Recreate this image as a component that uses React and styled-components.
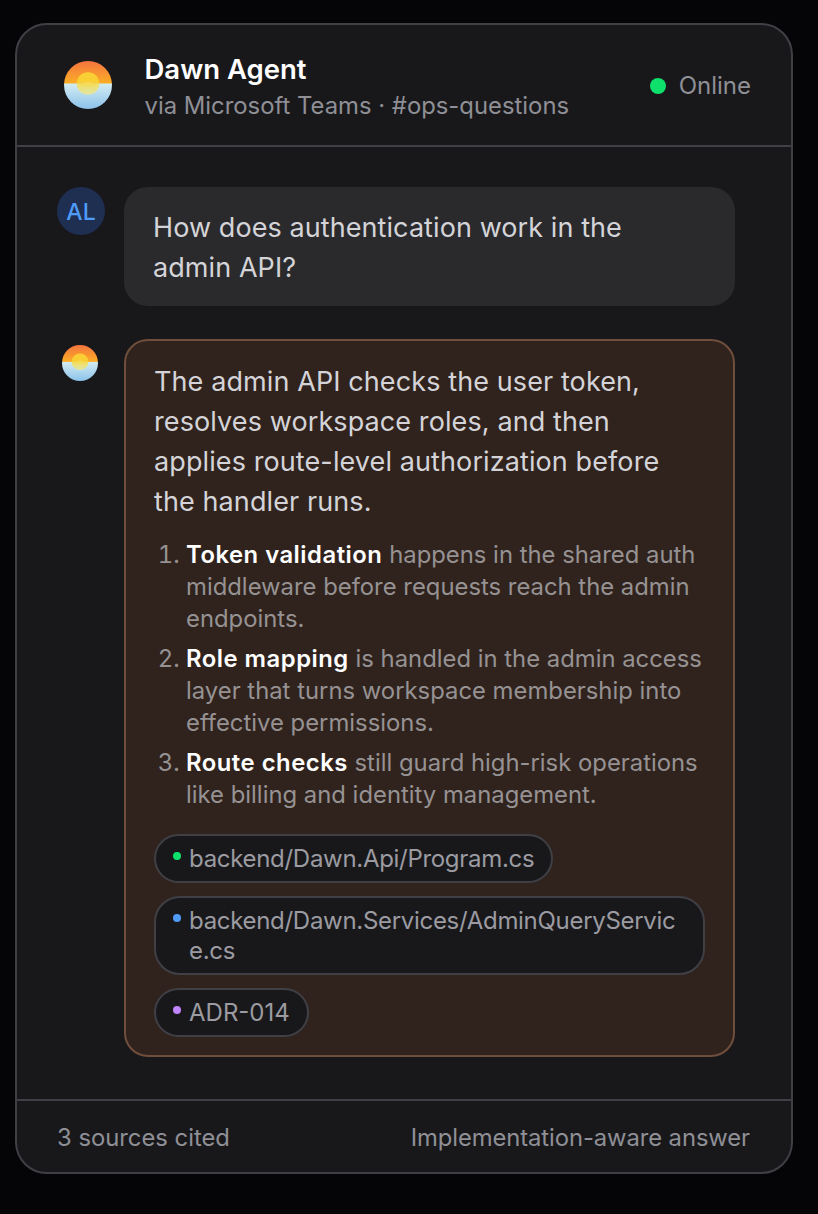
import React from 'react'
import styled, { createGlobalStyle } from 'styled-components'

const GlobalStyle = createGlobalStyle`
  html, body {
    margin: 0;
    background: #050507;
  }
  * {
    box-sizing: border-box;
  }
`

const Page = styled.div`
  min-height: 1214px;
  padding: 23px 25px 40px 15px;
  font-family: Inter, 'Liberation Sans', sans-serif;
`

const Card = styled.section`
  display: flex;
  flex-direction: column;
  height: 1151px;
  border: 2px solid #3f3f46;
  border-radius: 32px;
  background: #18181b;
  overflow: hidden;
`

const Header = styled.header`
  display: flex;
  align-items: center;
  gap: 33px;
  height: 122px;
  padding: 0 40px 0 47px;
  border-bottom: 2px solid #3f3f46;
`

const HeaderText = styled.div`
  flex: 1;
  display: flex;
  flex-direction: column;
  gap: 4px;
  padding-top: 3px;
  margin-left: -0.5px;
`

const Title = styled.h1`
  margin: 0;
  font-size: 27.5px;
  line-height: 34px;
  font-weight: 600;
  color: #fff;
`

const Subtitle = styled.div`
  font-size: 23.85px;
  line-height: 32px;
  color: #8f8f96;
`

const Status = styled.div`
  display: flex;
  align-items: center;
  gap: 13px;
  padding-top: 2px;
  font-size: 24px;
  line-height: 32px;
  color: #8f8f96;
`

const Dot = styled.span`
  flex: none;
  width: ${props => props.$size}px;
  height: ${props => props.$size}px;
  border-radius: 50%;
  background: ${props => props.$color};
`

const Thread = styled.div`
  flex: 1;
  display: flex;
  flex-direction: column;
  gap: 33px;
  padding: 40px 56px 0 40px;
`

const Message = styled.article`
  display: flex;
  gap: 19px;
`

const AvatarSlot = styled.div`
  flex: none;
  width: 48px;
  display: flex;
  justify-content: center;
`

const AgentAvatarSlot = styled(AvatarSlot)`
  padding: 6px 2px 0 0;
`

const Initials = styled.div`
  width: 48px;
  height: 48px;
  padding-top: 1px;
  border-radius: 50%;
  background: #1e2f52;
  color: #4f9bf7;
  font-size: 23px;
  font-weight: 500;
  display: flex;
  align-items: center;
  justify-content: center;
`

const UserBubble = styled.div`
  flex: 1;
  padding: 21px 29px 18px;
  border-radius: 24px;
  background: #2a2a2d;
  color: #d4d4d8;
  font-size: 27px;
  letter-spacing: 0.08px;
  line-height: 40px;
`

const AgentBubble = styled.div`
  flex: 1;
  height: 718px;
  padding: 21px 28px 0;
  border: 2px solid #6f4e3c;
  border-radius: 24px;
  background: #30231d;
`

const Lead = styled.p`
  margin: 0;
  color: #d4d4d8;
  font-size: 27px;
  letter-spacing: 0.1px;
  line-height: 40px;
`

const Steps = styled.ol`
  margin: 17px 0 0;
  padding: 0 0 0 32px;
  display: flex;
  flex-direction: column;
  gap: 8px;
  color: #969293;
  font-size: 23.85px;
  line-height: 32px;
`

const Step = styled.li`
  padding-left: 0;
`

const Strong = styled.strong`
  color: #fff;
  font-weight: 600;
  letter-spacing: 0.5px;
`

const Sources = styled.div`
  margin-top: 23px;
  display: flex;
  flex-direction: column;
  align-items: flex-start;
  gap: 13px;
`

const Pill = styled.div`
  display: flex;
  gap: 8px;
  max-width: 100%;
  padding: 8px 17px 7px;
  border: 2px solid #3f3f46;
  border-radius: 26px;
  background: #18181b;
  color: #9b9ba1;
  font-size: 24px;
  letter-spacing: ${props => (props.$path ? '-0.3px' : '0')};
  line-height: 30px;
`

const PillDot = styled(Dot)`
  margin-top: 8px;
`

const PillLabel = styled.span`
  min-width: 0;
  overflow-wrap: anywhere;
`

const Footer = styled.footer`
  display: flex;
  justify-content: space-between;
  align-items: center;
  height: 73px;
  padding: 2px 41px 0 40px;
  border-top: 2px solid #3f3f46;
  color: #8f8f96;
  font-size: 23.8px;
`

const FooterNote = styled.span`
  letter-spacing: -0.08px;
`

const DawnLogo = ({ size }) => (
  <svg width={size} height={size} viewBox="0 0 48 48" aria-hidden="true">
    <defs>
      <linearGradient id="dawnSky" x1="0" y1="0" x2="0" y2="1">
        <stop offset="0" stopColor="#f4743f" />
        <stop offset="1" stopColor="#fbaf25" />
      </linearGradient>
      <linearGradient id="dawnSea" x1="0" y1="0" x2="0" y2="1">
        <stop offset="0" stopColor="#d3ecf2" />
        <stop offset="1" stopColor="#8cc2ea" />
      </linearGradient>
      <linearGradient id="dawnGlow" x1="0" y1="0" x2="0" y2="1">
        <stop offset="0" stopColor="#f1de62" />
        <stop offset="1" stopColor="#dfe6a6" />
      </linearGradient>
      <clipPath id="dawnDisc">
        <circle cx="24" cy="24" r="24" />
      </clipPath>
    </defs>
    <g clipPath="url(#dawnDisc)">
      <rect x="0" y="0" width="48" height="23" fill="url(#dawnSky)" />
      <rect x="0" y="22.5" width="48" height="25.5" fill="url(#dawnSea)" />
      <path d="M12.7 22.5a11.3 11.3 0 0 1 22.6 0z" fill="#f9cf35" />
      <path d="M12.7 22.5a11.3 11.3 0 0 0 22.6 0z" fill="url(#dawnGlow)" />
      <path d="M16 25c2-3 5-4 8-4s6 1 8 4z" fill="#f4dc5a" />
    </g>
  </svg>
)

export default function App() {
  return (
    <Page>
      <GlobalStyle />
      <Card>
        <Header>
          <DawnLogo size={48} />
          <HeaderText>
            <Title>Dawn Agent</Title>
            <Subtitle>via Microsoft Teams · #ops-questions</Subtitle>
          </HeaderText>
          <Status>
            <Dot $size={16} $color="#0ee06c" />
            Online
          </Status>
        </Header>
        <Thread>
          <Message>
            <AvatarSlot>
              <Initials>AL</Initials>
            </AvatarSlot>
            <UserBubble>How does authentication work in the admin API?</UserBubble>
          </Message>
          <Message>
            <AgentAvatarSlot>
              <DawnLogo size={36} />
            </AgentAvatarSlot>
            <AgentBubble>
              <Lead>
                The admin API checks the user token, resolves workspace roles, and then applies
                route-level authorization before the handler runs.
              </Lead>
              <Steps>
                <Step>
                  <Strong>Token validation</Strong> happens in the shared auth middleware before
                  requests reach the admin endpoints.
                </Step>
                <Step>
                  <Strong>Role mapping</Strong> is handled in the admin access layer that turns
                  workspace membership into effective permissions.
                </Step>
                <Step>
                  <Strong>Route checks</Strong> still guard high-risk operations like billing and
                  identity management.
                </Step>
              </Steps>
              <Sources>
                <Pill $path>
                  <PillDot $size={8} $color="#0ee06c" />
                  <PillLabel>backend/Dawn.Api/Program.cs</PillLabel>
                </Pill>
                <Pill $path>
                  <PillDot $size={8} $color="#4f9bf7" />
                  <PillLabel>backend/Dawn.Services/AdminQueryService.cs</PillLabel>
                </Pill>
                <Pill>
                  <PillDot $size={8} $color="#c084fc" />
                  <PillLabel>ADR-014</PillLabel>
                </Pill>
              </Sources>
            </AgentBubble>
          </Message>
        </Thread>
        <Footer>
          <span>3 sources cited</span>
          <FooterNote>Implementation-aware answer</FooterNote>
        </Footer>
      </Card>
    </Page>
  )
}
